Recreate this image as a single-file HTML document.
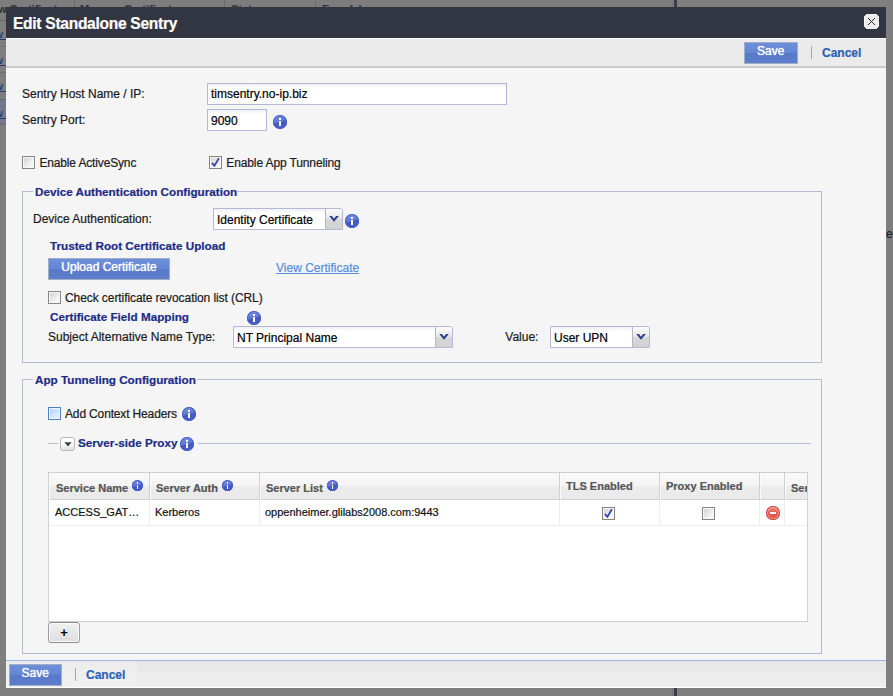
<!DOCTYPE html>
<html>
<head>
<meta charset="utf-8">
<title>Edit Standalone Sentry</title>
<style>
html,body{margin:0;padding:0;}
body{width:893px;height:696px;overflow:hidden;background:#7f7f7f;position:relative;font-family:"Liberation Sans",Arial,sans-serif;font-size:12px;color:#1a1a1a;}
.abs{position:absolute;}
.t{position:absolute;white-space:nowrap;line-height:14px;height:14px;-webkit-text-stroke:0.2px currentColor;}
.b{font-weight:bold;}
.navy{color:#1c2c86;font-weight:bold;font-size:11.7px;}
#dlg{position:absolute;left:6px;top:7px;width:880px;height:681px;background:#f5f5f5;overflow:hidden;}
#title{position:absolute;left:0;top:0;width:880px;height:31px;background:#323642;}
#title .t{left:7px;top:7.5px;font-size:15.6px;letter-spacing:-0.3px;font-weight:bold;color:#fff;line-height:18px;height:18px;}
#tb1{position:absolute;left:0;top:31px;width:880px;height:27px;background:#ebebeb;border-top:1px solid #fbfbfb;border-bottom:2px solid #cbcbcb;}
#tb2{position:absolute;left:0;top:653px;width:880px;height:26px;background:linear-gradient(#e6e6e6,#efefef);border-top:1px solid #9db4e0;border-bottom:1px solid #fff;}
.save{position:absolute;width:51.5px;height:20px;border:1px solid #a3acc6;background:linear-gradient(#6c8fda 0%,#6486d4 48%,#5779c8 52%,#5c7ecb 100%);color:#fff;text-align:center;line-height:17px;font-size:12px;text-shadow:0 0 1px #fff;}
.cancel{color:#2a62b7;font-weight:bold;font-size:12px;}
.sep{position:absolute;width:1px;height:13px;background:#a8a89a;}
.inp{position:absolute;box-sizing:border-box;height:22px;border:1px solid #b4b8d6;background:linear-gradient(#eef0f6 0,#fff 4px,#fff 100%);}
.inp .t{left:3px;top:4px;color:#000;}
.trig{position:absolute;right:0;top:0;width:16px;height:20px;border-left:1px solid #b4b6c8;border-radius:0 2px 0 0;background:linear-gradient(#fbfbfb 0%,#e9e9e9 45%,#d6d6d6 55%,#d2d2d2 100%);}
.sel{border-radius:0 3px 0 0;}
.cb{position:absolute;box-sizing:border-box;width:13px;height:13px;border:1px solid #858585;background:linear-gradient(135deg,#cfcfd4,#f6f6f6 75%);box-shadow:inset 0 0 0 1px #f7f7f7;}
.fs{position:absolute;box-sizing:border-box;border:1px solid #b8bad0;}
.leg{position:absolute;background:#f5f5f5;height:14px;}
.hd{position:absolute;top:0;height:27px;box-sizing:border-box;border-right:1px solid #d0d0d0;border-left:1px solid #fafafa;}
.hd .t{font-weight:bold;font-size:11px;color:#555;}
.cell{position:absolute;top:27px;height:26px;box-sizing:border-box;border-right:1px solid #ededed;}
.cell .t{font-size:11px;color:#111;}

.info{position:absolute;width:14px;height:14px;border-radius:50%;background:linear-gradient(165deg,#8098e6 0%,#6079d8 45%,#4058c0 56%,#4f68cc 100%);box-shadow:inset 0 0 0 1px rgba(68,88,196,.9);}
.info::before{content:"";position:absolute;left:6px;top:3px;width:2px;height:2px;background:#fff;}
.info::after{content:"";position:absolute;left:6px;top:6px;width:2px;height:5px;background:#fdf8ea;}
.info.sm{width:11px;height:11px;}
.info.sm::before{left:4.75px;top:2px;width:1.5px;height:2px;}
.info.sm::after{left:4.75px;top:4.5px;width:1.5px;height:4px;}
.ck{position:absolute;left:0;top:0;}
.cbf{border-color:#4c80c2;background:linear-gradient(135deg,#a6ceff,#e4f2ff 80%);box-shadow:inset 0 0 0 1px #f4f9ff;}
.upl{position:absolute;width:120px;height:20px;border:1px solid #a3acc6;background:linear-gradient(#6c8fda 0%,#6486d4 48%,#5779c8 52%,#5c7ecb 100%);color:#fff;text-align:center;line-height:17px;font-size:12px;text-shadow:0 0 1px #fff;}
.tog{position:absolute;box-sizing:border-box;width:15px;height:14px;border:1px solid #b8b8b8;border-radius:3px;background:linear-gradient(#fff 0%,#fafafa 50%,#e2e2e2 100%);}
#grid{position:absolute;left:42px;top:465px;width:758px;height:148px;border:1px solid #d0d0d0;background:#fff;overflow:hidden;}
.del{position:absolute;width:14px;height:14px;border-radius:50%;background:linear-gradient(#f0907c 0%,#e85a50 50%,#dc4444 100%);box-shadow:inset 0 0 0 1px #c9443e,inset 0 0 0 2px rgba(255,205,195,.55);}
.del::after{content:"";position:absolute;left:4px;top:6px;width:6px;height:2px;background:#fff;}
.plus{position:absolute;box-sizing:border-box;width:32px;height:21px;border:1px solid #9c9c9c;border-top-color:#8a8a8a;border-bottom-color:#8a8a8a;border-radius:3.5px;background:linear-gradient(#f1f1f1,#dddddd);box-shadow:inset 0 0 0 1px #fcfcfc;text-align:center;font-weight:bold;font-size:13px;line-height:20px;color:#000;}
.lk{left:-5px;font-size:11px;color:#1e3a78;text-decoration:underline;}
</style>
</head>
<body>
<!-- background page fragments -->
<div class="abs" style="left:0;top:0;width:672px;height:20px;background:#7d7d7d;border-bottom:1px solid #6c6c6c;"></div>
<div class="abs" style="left:0;top:99px;width:6px;height:25px;background:#737889;"></div>
<div class="abs" style="left:74px;top:0;width:1px;height:8px;background:#6a6a6a;"></div>
<div class="abs" style="left:224px;top:0;width:1px;height:8px;background:#6a6a6a;"></div>
<div class="abs" style="left:315px;top:0;width:1px;height:8px;background:#6a6a6a;"></div>
<div class="abs" style="left:672px;top:0;width:1px;height:696px;background:#707070;"></div>
<div class="abs" style="left:674px;top:0;width:3px;height:696px;background:#393c45;"></div>
<div class="t b" style="left:-2px;top:1.5px;font-size:11px;color:#333;">w Certificate</div>
<div class="t b" style="left:80px;top:1.5px;font-size:11px;color:#333;">Manage Certificate</div>
<div class="t b" style="left:231px;top:1.5px;font-size:11px;color:#333;">Status</div>
<div class="t b" style="left:322px;top:1.5px;font-size:11px;color:#333;">Error(s)</div>
<div class="t lk" style="top:26.5px;">w&nbsp;&nbsp;</div>
<div class="t lk" style="top:53px;">w&nbsp;&nbsp;</div>
<div class="t lk" style="top:78.6px;">w&nbsp;&nbsp;</div>
<div class="t lk" style="top:105.5px;">w&nbsp;&nbsp;</div>
<div class="abs" style="left:0;top:46px;width:6px;height:1px;background:#6e6e6e;"></div>
<div class="abs" style="left:0;top:72px;width:6px;height:1px;background:#6e6e6e;"></div>
<div class="abs" style="left:0;top:99px;width:6px;height:0;border-top:1px dotted #5a6078;"></div>
<div class="abs" style="left:0;top:124px;width:6px;height:0;border-top:1px dotted #5a6078;"></div>
<div class="t" style="left:886px;top:226.5px;font-size:12px;color:#222;">e</div>

<div id="dlg">
  <div id="title"><div class="t">Edit Standalone Sentry</div>
    <svg class="abs" style="left:858px;top:7px" width="15" height="15" viewBox="0 0 15 15"><path d="M2.5 0.5h10l2 2v10l-2 2h-10l-2-2v-10z" fill="#ececec" stroke="#f8f8f8" stroke-width="1"/><path d="M4 4l7 7M11 4l-7 7" stroke="#2a2a2a" stroke-width="1" fill="none"/></svg>
  </div>
  <div id="tb1">
    <div class="save" style="left:738px;top:2.5px;">Save</div>
    <div class="sep" style="left:805px;top:7px;"></div>
    <div class="t cancel" style="left:816px;top:7px;">Cancel</div>
  </div>

  <div class="t" style="left:16px;top:80px;">Sentry Host Name / IP:</div>
  <div class="inp" style="left:201px;top:76px;width:300px;"><div class="t" style="top:3px;">timsentry.no-ip.biz</div></div>
  <div class="t" style="left:16px;top:106px;">Sentry Port:</div>
  <div class="inp" style="left:201px;top:102px;width:60px;"><div class="t" style="top:3.5px;">9090</div></div>
  <div class="info" style="left:267px;top:108px;"></div>

  <div class="cb" style="left:16px;top:149px;"></div>
  <div class="t" style="left:33.4px;top:148.6px;letter-spacing:-0.15px;">Enable ActiveSync</div>
  <div class="cb" style="left:203px;top:149px;"><svg class="ck" width="11" height="11" viewBox="0 0 11 11"><path d="M1.9 5.9L4.4 8.8 8.9 1.3" fill="none" stroke="#3545a6" stroke-width="1.7"/></svg></div>
  <div class="t" style="left:220.3px;top:149px;letter-spacing:-0.12px;">Enable App Tunneling</div>

  <!-- fieldset 1 -->
  <div class="fs" style="left:16px;top:184px;width:800px;height:172px;"></div>
  <div class="leg" style="left:27px;top:177.5px;width:204px;"></div>
  <div class="t navy" style="left:29px;top:177.5px;">Device Authentication Configuration</div>
  <div class="t" style="left:27px;top:204.5px;">Device Authentication:</div>
  <div class="inp sel" style="left:207px;top:201px;width:130px;"><div class="t">Identity Certificate</div><div class="trig"><svg class="abs" style="left:3px;top:7px" width="10" height="6" viewBox="0 0 10 6"><path d="M0.2 0h2.7L5 2.7 7.1 0h2.7L5 5.7z" fill="#2a3a8a"/></svg></div></div>
  <div class="info" style="left:339px;top:207px;"></div>
  <div class="t navy" style="left:44px;top:231.7px;">Trusted Root Certificate Upload</div>
  <div class="upl" style="left:42px;top:250.5px;">Upload Certificate</div>
  <div class="t" style="left:270px;top:253.5px;color:#5490de;text-decoration:underline;">View Certificate</div>
  <div class="cb" style="left:42px;top:284px;"></div>
  <div class="t" style="left:59px;top:284px;letter-spacing:-0.08px;">Check certificate revocation list (CRL)</div>
  <div class="t navy" style="left:44px;top:303px;">Certificate Field Mapping</div>
  <div class="info" style="left:241px;top:304px;"></div>
  <div class="t" style="left:42px;top:323px;">Subject Alternative Name Type:</div>
  <div class="inp sel" style="left:227px;top:319px;width:220px;"><div class="t">NT Principal Name</div><div class="trig"><svg class="abs" style="left:3px;top:7px" width="10" height="6" viewBox="0 0 10 6"><path d="M0.2 0h2.7L5 2.7 7.1 0h2.7L5 5.7z" fill="#2a3a8a"/></svg></div></div>
  <div class="t" style="left:499.3px;top:323px;">Value:</div>
  <div class="inp sel" style="left:544px;top:319px;width:100px;"><div class="t">User UPN</div><div class="trig"><svg class="abs" style="left:3px;top:7px" width="10" height="6" viewBox="0 0 10 6"><path d="M0.2 0h2.7L5 2.7 7.1 0h2.7L5 5.7z" fill="#2a3a8a"/></svg></div></div>

  <!-- fieldset 2 -->
  <div class="fs" style="left:16px;top:372px;width:800px;height:275px;"></div>
  <div class="leg" style="left:27px;top:365.6px;width:164px;"></div>
  <div class="t navy" style="left:29px;top:365.6px;">App Tunneling Configuration</div>
  <div class="cb cbf" style="left:42px;top:400px;"></div>
  <div class="t" style="left:59px;top:399.6px;letter-spacing:-0.15px;">Add Context Headers</div>
  <div class="info" style="left:176px;top:400px;"></div>

  <div class="abs" style="left:42px;top:436px;width:10px;height:1px;background:#b8bad0;"></div>
  <div class="abs" style="left:192px;top:436px;width:613px;height:1px;background:#b8bad0;"></div>
  <div class="tog" style="left:54px;top:430px;"><svg class="abs" style="left:3px;top:4px" width="8" height="5" viewBox="0 0 8 5"><path d="M0.3 0.3h7.4L4 4.6z" fill="#444"/></svg></div>
  <div class="t navy" style="left:72px;top:429.2px;">Server-side Proxy</div>
  <div class="info" style="left:174px;top:430px;"></div>

  <div id="grid">
    <div class="abs" style="left:0;top:0;width:758px;height:27px;background:linear-gradient(#f9f9f9 0%,#f4f4f4 48%,#ececec 52%,#e9e9e9 100%);border-bottom:1px solid #d0d0d0;box-sizing:border-box;"></div>
    <div class="hd" style="left:0;width:101px;"><div class="t" style="left:6px;top:8px;">Service Name</div><div class="info sm" style="left:82px;top:7px;"></div></div>
    <div class="hd" style="left:101px;width:110px;"><div class="t" style="left:5px;top:8px;">Server Auth</div><div class="info sm" style="left:71px;top:7px;"></div></div>
    <div class="hd" style="left:211px;width:300px;"><div class="t" style="left:5px;top:8px;">Server List</div><div class="info sm" style="left:66px;top:7px;"></div></div>
    <div class="hd" style="left:511px;width:100px;"><div class="t" style="left:5px;top:6px;">TLS Enabled</div></div>
    <div class="hd" style="left:611px;width:100px;"><div class="t" style="left:5px;top:6px;">Proxy Enabled</div></div>
    <div class="hd" style="left:711px;width:25px;"></div>
    <div class="hd" style="left:736px;width:40px;border-right:none;"><div class="t" style="left:5px;top:8px;">Server</div></div>

    <div class="abs" style="left:0;top:27px;width:758px;height:26px;background:#fff;border-bottom:1px solid #ededed;box-sizing:border-box;"></div>
    <div class="cell" style="left:0;width:101px;"><div class="t" style="left:6px;top:5px;">ACCESS_GAT…</div></div>
    <div class="cell" style="left:101px;width:110px;"><div class="t" style="left:5px;top:5px;">Kerberos</div></div>
    <div class="cell" style="left:211px;width:300px;"><div class="t" style="left:5px;top:5px;">oppenheimer.glilabs2008.com:9443</div></div>
    <div class="cell" style="left:511px;width:100px;"><div class="cb" style="left:42px;top:7px;"><svg class="ck" width="11" height="11" viewBox="0 0 11 11"><path d="M1.9 5.9L4.4 8.8 8.9 1.3" fill="none" stroke="#3545a6" stroke-width="1.7"/></svg></div></div>
    <div class="cell" style="left:611px;width:100px;"><div class="cb" style="left:42px;top:7px;"></div></div>
    <div class="cell" style="left:711px;width:25px;"><div class="del" style="left:6px;top:6px;"></div></div>
  </div>
  <div class="plus" style="left:42px;top:615px;">+</div>

  <div id="tb2">
    <div class="abs" style="left:0;top:0;width:131px;height:26px;background:linear-gradient(#ececec,#f1f1f1);"></div>
    <div class="save" style="left:2.5px;top:2.5px;">Save</div>
    <div class="sep" style="left:69px;top:7px;"></div>
    <div class="t cancel" style="left:80px;top:7px;">Cancel</div>
  </div>
</div>
</body>
</html>
